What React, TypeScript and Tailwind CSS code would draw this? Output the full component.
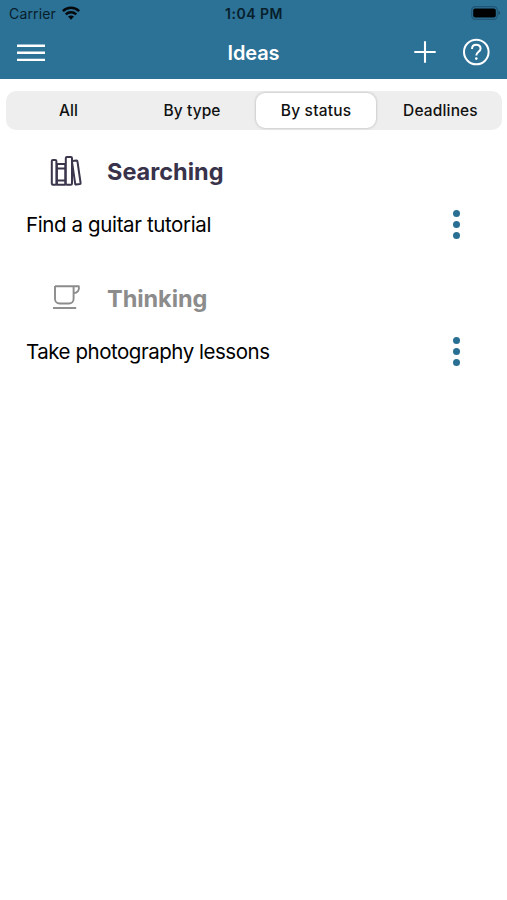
import type { ReactNode } from 'react';

type StatusSectionProps = {
  icon: ReactNode;
  title: string;
  titleClass: string;
  idea: string;
  ideaClass: string;
};

const tabs = [
  { label: 'All', spacing: 'pl-px' },
  { label: 'By type', spacing: 'tracking-[0.1px]' },
  { label: 'By status', spacing: 'tracking-[0.2px]' },
  { label: 'Deadlines', spacing: 'pl-px tracking-[0.15px]' },
];

const WifiIcon = () => (
  <svg className="w-[18px] h-[14px] -mt-[2px]" viewBox="0 0 18 14" fill="none" stroke="#05090c" strokeWidth="2.5">
    <path d="M0.9 5.1C5.4 0.7 12.6 0.7 17.1 5.1" />
    <path d="M3.8 8.3C6.7 5.5 11.3 5.5 14.2 8.3" />
    <path d="M9 13.7L6 10.6C7.6 9.1 10.4 9.1 12 10.6Z" fill="#05090c" stroke="none" />
  </svg>
);

const BatteryIcon = () => (
  <svg className="w-[30px] h-[14px] -mr-[2px] -mt-px" viewBox="0 0 30 14">
    <rect x="0.7" y="0.7" width="25.6" height="12.6" rx="3.6" fill="none" stroke="#205673" strokeWidth="1.2" />
    <rect x="2.2" y="2.4" width="22.6" height="9.2" rx="2" fill="#000000" />
    <path d="M27.5 4.8C29.6 5.5 29.6 8.5 27.5 9.2Z" fill="#1d4a62" />
  </svg>
);

const BooksIcon = () => (
  <svg className="w-[34px] h-[32px] -mt-px" viewBox="0 0 34 32" fill="none" stroke="#3b364c" strokeWidth="2" strokeLinejoin="round">
    <rect x="2.8" y="3.9" width="4.6" height="24.8" rx="1.2" />
    <path d="M7.4 8.1H16.6M7.4 12.5H16.6M7.4 24.5H16.6M7.4 28.7H16.6" />
    <path d="M8.2 8.1V28.7M16 8.1V28.7" strokeWidth="1.4" />
    <rect x="16.8" y="1" width="6.2" height="27.7" rx="1.2" />
    <path d="M23.6 4.9L27.4 4.4Q28.3 4.3 28.4 5.2L31.6 27Q31.7 27.9 30.9 28L27.1 28.5Q26.3 28.6 26.2 27.8L23 5.8Q22.8 5 23.6 4.9Z" />
  </svg>
);

const CupIcon = () => (
  <svg className="w-[30px] h-[28px] ml-[3px] -mt-px" viewBox="0 0 30 28" fill="none" stroke="#8c8c8c" strokeWidth="1.9">
    <path d="M3 1.3H26.8C27.6 5.2 25.6 7.9 21.6 8" strokeLinejoin="round" />
    <path d="M3 1V13.7C3 16.4 5 18.5 7.6 18.5H17C19.6 18.5 21.6 16.4 21.6 13.7V1.2" />
    <path d="M1 23H24.2" />
  </svg>
);

const StatusSection = ({ icon, title, titleClass, idea, ideaClass }: StatusSectionProps) => (
  <section>
    <div className="flex items-center h-[52px] pl-[49px]">
      <div className="w-[58px] flex items-center">{icon}</div>
      <h2 className={titleClass}>{title}</h2>
    </div>
    <div className="flex items-center justify-between h-[54px] pl-[26px] pr-[47px]">
      <p className={ideaClass}>{idea}</p>
      <button className="flex flex-col gap-1 -mt-px" aria-label="More">
        <span className="size-[7px] rounded-full bg-[#296f94]" />
        <span className="size-[7px] rounded-full bg-[#296f94]" />
        <span className="size-[7px] rounded-full bg-[#296f94]" />
      </button>
    </div>
  </section>
);

const App = () => {
  return (
    <div className="w-full h-[900px] overflow-hidden bg-white font-[Inter,sans-serif]">
      <header className="h-[79px] bg-[#2c7196]">
        {/* Status bar */}
        <div className="grid grid-cols-3 items-center h-[27px] pl-[9px] pr-[8px] text-[#071e2b]">
          <div className="flex items-center gap-[6px]">
            <span className="text-[14px] leading-none tracking-[0.15px]">Carrier</span>
            <WifiIcon />
          </div>
          <span className="pt-px text-center text-[14px] leading-none font-semibold tracking-[0.5px]">1:04 PM</span>
          <div className="flex justify-end">
            <BatteryIcon />
          </div>
        </div>

        {/* Navigation */}
        <div className="grid grid-cols-3 items-center h-[51px] px-[17px] text-white">
          <svg className="w-[28px] h-[18px]" viewBox="0 0 28 18" stroke="white" strokeWidth="2.4">
            <path d="M0 1.7H28M0 8.8H28M0 15.9H28" />
          </svg>
          <h1 className="text-center text-[20px] leading-none font-semibold tracking-[-0.1px]">Ideas</h1>
          <div className="flex items-center justify-end gap-[26px] -mt-px">
            <svg className="size-[22px]" viewBox="0 0 22 22" stroke="white" strokeWidth="2.1">
              <path d="M11 0.3V21.7M0.3 11H21.7" />
            </svg>
            <svg className="size-[28px]" viewBox="0 0 28 28" fill="none" stroke="white" strokeWidth="2">
              <circle cx="14.3" cy="14" r="12.3" />
              <path d="M10 10.9C10 5.2 18.6 5.5 18.6 10.5C18.6 13.8 14.3 13.7 14.3 17.5" />
              <circle cx="14.3" cy="20.6" r="1.3" fill="white" stroke="none" />
            </svg>
          </div>
        </div>
      </header>

      <nav className="mt-[12px] ml-[6px] mr-[5px] h-[39px] grid grid-cols-4 rounded-[10px] bg-[#eeeeee] py-[2px] text-[15.5px] font-medium text-[#111111]">
        {tabs.map((tab) => (
          <button
            key={tab.label}
            className={
              tab.label === 'By status'
                ? 'mx-[2px] pt-px rounded-[9px] bg-white shadow-[0_0_3px_rgba(0,0,0,0.28)] ' + tab.spacing
                : 'pt-px ' + tab.spacing
            }
          >
            {tab.label}
          </button>
        ))}
      </nav>

      <main className="pt-[16px] flex flex-col gap-[21px]">
        <StatusSection
          icon={<BooksIcon />}
          title="Searching"
          titleClass="text-[23.5px] leading-none font-bold tracking-[0px] text-[#38334a]"
          idea="Find a guitar tutorial"
          ideaClass="text-[20.5px] leading-none tracking-[-0.38px] text-black"
        />
        <StatusSection
          icon={<CupIcon />}
          title="Thinking"
          titleClass="text-[23.5px] leading-none font-bold tracking-[-0.05px] text-[#8c8c8c]"
          idea="Take photography lessons"
          ideaClass="text-[20.5px] leading-none tracking-[-0.47px] text-black"
        />
      </main>
    </div>
  );
};

export default App;
